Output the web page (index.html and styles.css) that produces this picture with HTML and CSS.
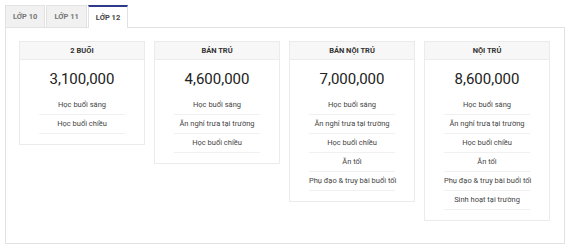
FILE: index.html
```html
<!DOCTYPE html>
<html lang="vi">
<head>
<meta charset="utf-8">
<link rel="stylesheet" href="styles.css">
</head>
<body>
<div class="tabs">
  <div class="tab">LỚP 10</div>
  <div class="tab">LỚP 11</div>
  <div class="tab active">LỚP 12</div>
</div>
<div class="panel">
  <div class="card">
    <div class="card-head">2 BUỔI</div>
    <div class="price">3,100,000</div>
    <ul class="items">
      <li>Học buổi sáng</li>
      <li>Học buổi chiều</li>
    </ul>
  </div>
  <div class="card">
    <div class="card-head">BÁN TRÚ</div>
    <div class="price">4,600,000</div>
    <ul class="items">
      <li>Học buổi sáng</li>
      <li>Ăn nghỉ trưa tại trường</li>
      <li>Học buổi chiều</li>
    </ul>
  </div>
  <div class="card">
    <div class="card-head">BÁN NỘI TRÚ</div>
    <div class="price">7,000,000</div>
    <ul class="items">
      <li>Học buổi sáng</li>
      <li>Ăn nghỉ trưa tại trường</li>
      <li>Học buổi chiều</li>
      <li>Ăn tối</li>
      <li>Phụ đạo &amp; truy bài buổi tối</li>
    </ul>
  </div>
  <div class="card">
    <div class="card-head">NỘI TRÚ</div>
    <div class="price">8,600,000</div>
    <ul class="items">
      <li>Học buổi sáng</li>
      <li>Ăn nghỉ trưa tại trường</li>
      <li>Học buổi chiều</li>
      <li>Ăn tối</li>
      <li>Phụ đạo &amp; truy bài buổi tối</li>
      <li>Sinh hoạt tại trường</li>
    </ul>
  </div>
</div>
</body>
</html>
```
FILE: styles.css
```css
* { box-sizing: border-box; }
body {
  margin: 5px;
  background: #fff;
  font-family: Roboto, "Liberation Sans", sans-serif;
  color: #333;
}
.tabs {
  display: flex;
  gap: 1px;
  height: 22px;
}
.tab {
  height: 22px;
  padding: 0 7px;
  display: flex;
  align-items: center;
  font-size: 7.5px;
  font-weight: 700;
  color: #777;
  background: #f1f1f1;
  border: 1px solid #e2e2e2;
  border-bottom: none;
}
.tab.active {
  background: #fff;
  color: #444;
  border-top: 2px solid #2d3a8c;
  height: 23px;
  position: relative;
  z-index: 1;
}
.panel {
  border: 1px solid #e2e2e2;
  display: flex;
  align-items: flex-start;
  gap: 9px;
  padding: 13px 13px 23px;
  height: 217px;
}
.card {
  width: 126px;
  border: 1px solid #ebebeb;
  padding-bottom: 10px;
}
.card-head {
  height: 18px;
  background: #f7f7f7;
  border-bottom: 1px solid #ececec;
  display: flex;
  align-items: center;
  justify-content: center;
  font-size: 7.5px;
  font-weight: 700;
  color: #333;
}
.price {
  text-align: center;
  font-size: 15px;
  color: #222;
  padding: 9px 0 7px;
  line-height: 20px;
}
.items {
  list-style: none;
  margin: 0 auto;
  padding: 0;
  width: 86px;
}
.items li {
  text-align: center;
  font-size: 7.5px;
  color: #444;
  line-height: 18px;
  border-bottom: 1px solid #f0f0f0;
  white-space: nowrap;
}
```
